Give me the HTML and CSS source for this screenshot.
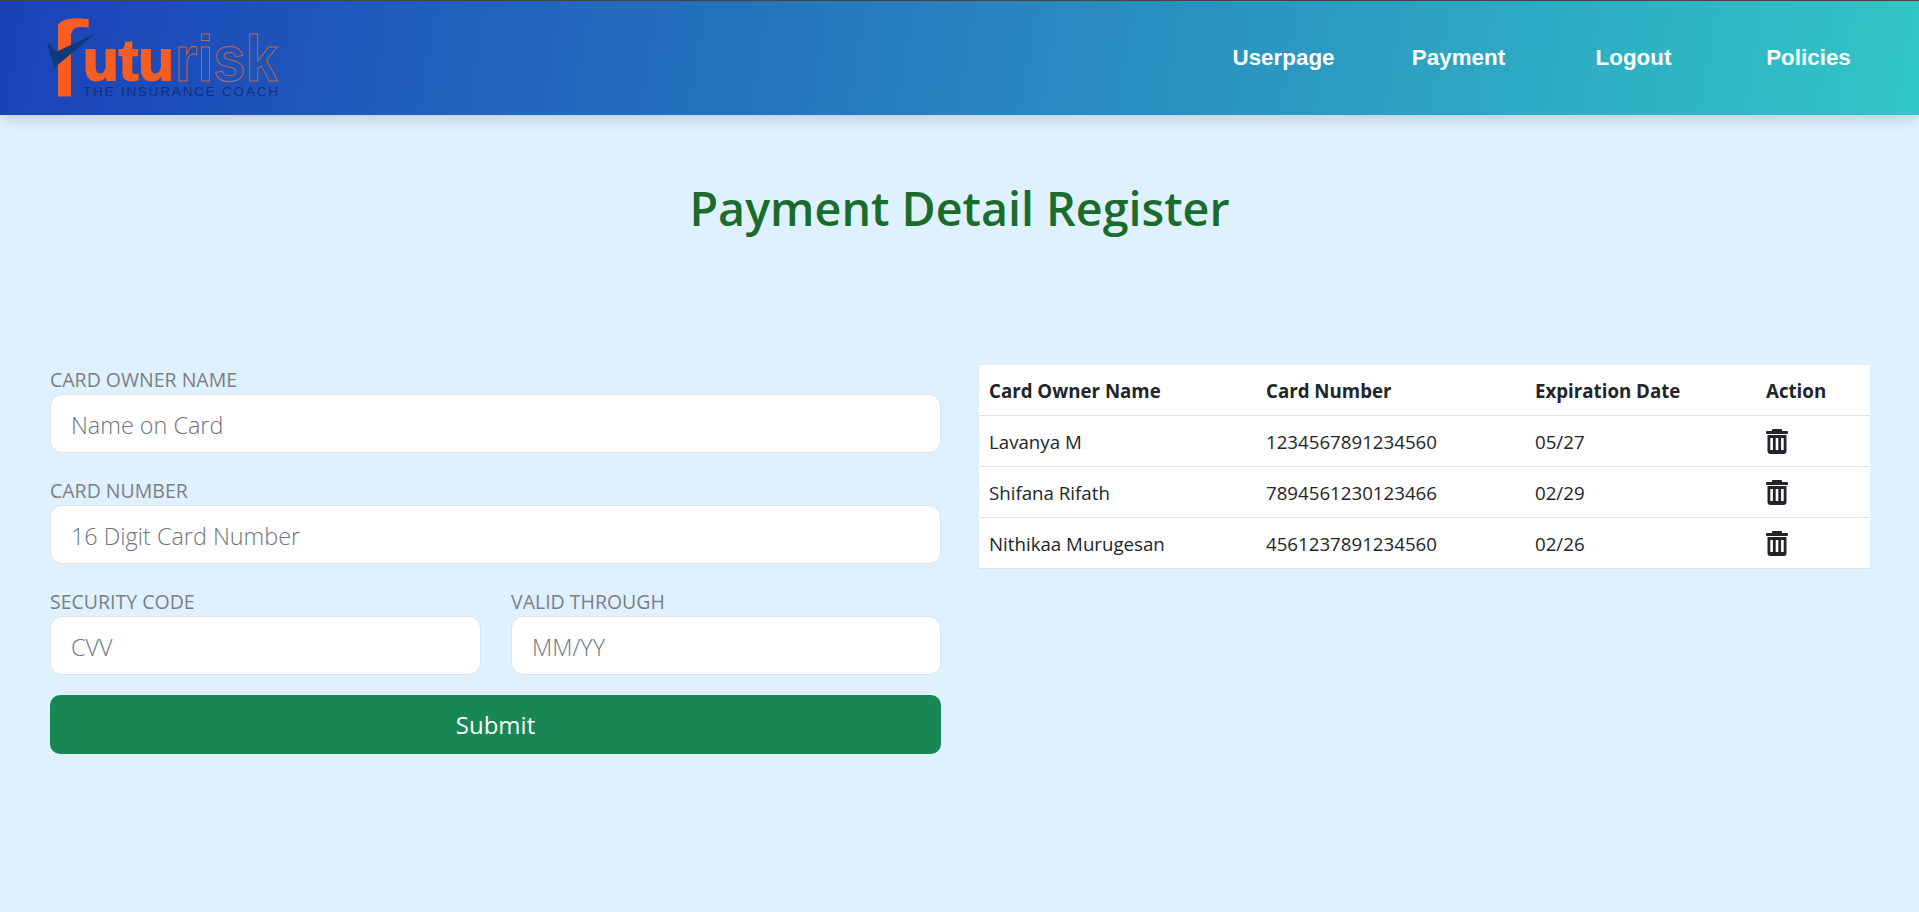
FILE: index.html
```html
<!DOCTYPE html>
<html lang="en">
<head>
<meta charset="utf-8">
<title>Payment Detail Register</title>
<link rel="stylesheet" href="styles.css">
</head>
<body>
<header class="navbar">
  <a class="logo" href="#" aria-label="Futurisk, the insurance coach">
    <svg class="logo-svg" width="240" height="90" viewBox="0 0 240 90">
      <defs>
        <clipPath id="f-clip"><polygon points="12,0 60,0 60,20 25,20 25,90 12,90"/></clipPath>
      </defs>
      <g clip-path="url(#f-clip)">
        <text class="logo-f" transform="translate(-4 83) scale(1.55 1)">f</text>
      </g>
      <text class="logo-solid" x="37" y="67" textLength="91" lengthAdjust="spacingAndGlyphs">utu</text>
      <text class="logo-outline" x="129" y="68" textLength="103" lengthAdjust="spacingAndGlyphs">risk</text>
      <text class="logo-tag" x="37" y="83" textLength="195" lengthAdjust="spacing">THE INSURANCE COACH</text>
      <polygon class="logo-check" points="1,29 10,39 50,20 8,55"/>
    </svg>
  </a>
  <nav class="nav-links">
    <a class="nav-link" href="#">Userpage</a>
    <a class="nav-link" href="#">Payment</a>
    <a class="nav-link" href="#">Logout</a>
    <a class="nav-link" href="#">Policies</a>
  </nav>
</header>

<main class="page">
  <h1 class="title">Payment Detail Register</h1>
  <div class="columns">
    <form class="card-form">
      <div class="field">
        <label class="field-label" for="owner">CARD OWNER NAME</label>
        <input class="field-input" id="owner" placeholder="Name on Card">
      </div>
      <div class="field">
        <label class="field-label" for="number">CARD NUMBER</label>
        <input class="field-input" id="number" placeholder="16 Digit Card Number">
      </div>
      <div class="field-row">
        <div class="field">
          <label class="field-label" for="cvv">SECURITY CODE</label>
          <input class="field-input" id="cvv" placeholder="CVV">
        </div>
        <div class="field">
          <label class="field-label" for="valid">VALID THROUGH</label>
          <input class="field-input" id="valid" placeholder="MM/YY">
        </div>
      </div>
      <button class="submit" type="button">Submit</button>
    </form>

    <table class="cards">
      <thead>
        <tr><th class="col-name">Card Owner Name</th><th class="col-num">Card Number</th><th class="col-date">Expiration Date</th><th>Action</th></tr>
      </thead>
      <tbody>
        <tr><td>Lavanya M</td><td>1234567891234560</td><td>05/27</td><td><svg class="trash" viewBox="0 0 22 25"><path fill-rule="evenodd" d="M7 0h8a1 1 0 0 1 1 1v1h5a1 1 0 0 1 1 1v1a1 1 0 0 1-1 1H1A1 1 0 0 1 0 4V3a1 1 0 0 1 1-1h5V1a1 1 0 0 1 1-1zM1.5 6h19v16a3 3 0 0 1-3 3h-13a3 3 0 0 1-3-3zM4.3 9v12h2.6V9zm5.4 0v12h2.6V9zm5.4 0v12h2.6V9z"/></svg></td></tr>
        <tr><td>Shifana Rifath</td><td>7894561230123466</td><td>02/29</td><td><svg class="trash" viewBox="0 0 22 25"><path fill-rule="evenodd" d="M7 0h8a1 1 0 0 1 1 1v1h5a1 1 0 0 1 1 1v1a1 1 0 0 1-1 1H1A1 1 0 0 1 0 4V3a1 1 0 0 1 1-1h5V1a1 1 0 0 1 1-1zM1.5 6h19v16a3 3 0 0 1-3 3h-13a3 3 0 0 1-3-3zM4.3 9v12h2.6V9zm5.4 0v12h2.6V9zm5.4 0v12h2.6V9z"/></svg></td></tr>
        <tr><td>Nithikaa Murugesan</td><td>4561237891234560</td><td>02/26</td><td><svg class="trash" viewBox="0 0 22 25"><path fill-rule="evenodd" d="M7 0h8a1 1 0 0 1 1 1v1h5a1 1 0 0 1 1 1v1a1 1 0 0 1-1 1H1A1 1 0 0 1 0 4V3a1 1 0 0 1 1-1h5V1a1 1 0 0 1 1-1zM1.5 6h19v16a3 3 0 0 1-3 3h-13a3 3 0 0 1-3-3zM4.3 9v12h2.6V9zm5.4 0v12h2.6V9zm5.4 0v12h2.6V9z"/></svg></td></tr>
      </tbody>
    </table>
  </div>
</main>
</body>
</html>
```

FILE: styles.css
```css
* { box-sizing: border-box; }
html, body { height: 100%; }
body {
  margin: 0;
  background: #dff1ff;
  font-family: "Open Sans", "Noto Sans", sans-serif;
  color: #212529;
  overflow: hidden;
}
.navbar {
  height: 115px;
  border-top: 1px solid #444;
  display: flex;
  align-items: center;
  justify-content: space-between;
  padding: 0 23px 0 46px;
  background: linear-gradient(100deg, #1a41b8 0%, #2a8fc0 60%, #31c6c6 100%);
  box-shadow: 0 3px 14px rgba(0, 0, 0, .16);
  position: relative;
}
.logo { display: block; height: 90px; }
.logo-svg { display: block; overflow: visible; }
.logo-f { font: 400 105px "Liberation Sans", sans-serif; fill: #f55d22; stroke: #f55d22; stroke-width: 1.5; }
.logo-solid { font: 700 58px "Liberation Sans", sans-serif; fill: #f55d22; stroke: #f55d22; stroke-width: 2; }
.logo-outline { font: 700 64px "Liberation Sans", sans-serif; fill: none; stroke: #c9683f; stroke-width: 1; }
.logo-tag { font: 400 13.5px "Liberation Sans", sans-serif; fill: #12307f; }
.logo-check { fill: #0f3a78; }
.nav-links { display: flex; align-items: center; }
.nav-link {
  font: 700 22.4px "Liberation Sans", Arial, sans-serif;
  color: #fff;
  text-decoration: none;
  width: 175px;
  text-align: center;
}
.title {
  margin: 0;
  padding-top: 60px;
  text-align: center;
  font-size: 46.6px;
  line-height: 66px;
  font-weight: 600;
  color: #1a6b2c;
}
.columns {
  display: grid;
  grid-template-columns: 891px 891px;
  column-gap: 38px;
  padding: 124px 0 0 50px;
  align-items: start;
}
.card-form { display: flex; flex-direction: column; margin-top: 2px; }
.field { display: flex; flex-direction: column; margin-bottom: 25px; }
.field-row { display: grid; grid-template-columns: 431px 430px; column-gap: 30px; }
.field-row .field { margin-bottom: 20px; }
.field-label {
  font-size: 19.5px;
  line-height: 26px;
  height: 27px;
  color: #7b7f84;
}
.field-input {
  height: 59px;
  border: 1px solid #dbe3ee;
  border-radius: 12px;
  background: #fff;
  padding: 3px 20px 0;
  font: 300 23.4px "Open Sans", sans-serif;
  color: #212529;
  outline: none;
  width: 100%;
}
.field-input::placeholder { color: #6c757d; opacity: 1; }
.submit {
  height: 59px;
  border: 0;
  border-radius: 10px;
  background: #198754;
  color: #fff;
  font: 400 24px "Open Sans", sans-serif;
}
.cards {
  width: 100%;
  table-layout: fixed;
  border-collapse: collapse;
  background: #fff;
  font-size: 18.7px;
}
.cards th, .cards td {
  padding: 13px 10px 11px;
  line-height: 26px;
  text-align: left;
  border-bottom: 1px solid #dee2e6;
  height: 51px;
  vertical-align: middle;
}
.cards th { font-weight: 700; height: 50px; }
.cards td:last-child { padding: 12px 10px; }
.col-name { width: 277px; }
.col-num { width: 269px; }
.col-date { width: 231px; }
.trash { width: 22px; height: 25px; display: block; fill: #212529; }
```
